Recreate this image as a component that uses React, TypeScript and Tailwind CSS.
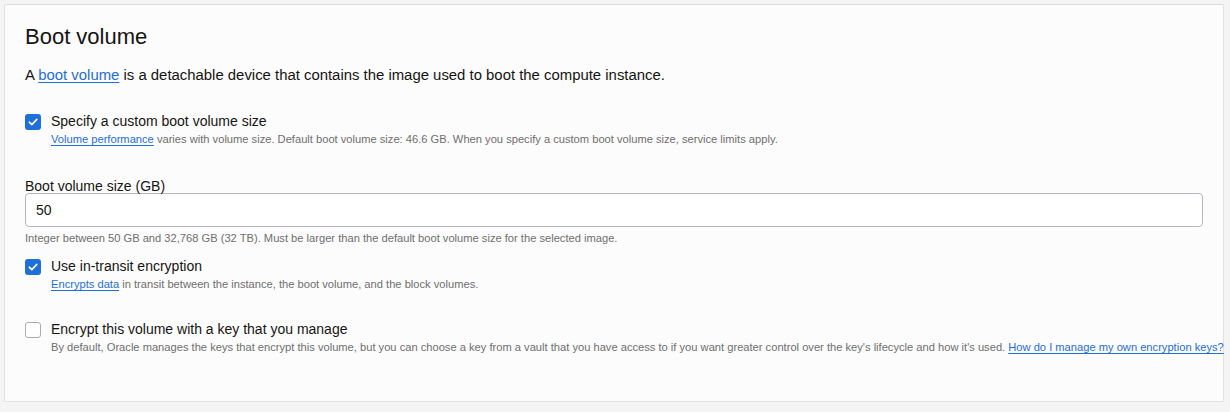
import React from "react";

const font = { fontFamily: '"Liberation Sans", Arial, Helvetica, sans-serif' };

function Check({ checked }: { checked: boolean }) {
  if (checked) {
    return (
      <span className="flex h-4 w-4 shrink-0 items-center justify-center rounded-[3px] bg-[#1f6fd8]">
        <svg width="12" height="12" viewBox="0 0 12 12" fill="none">
          <path d="M2.3 6.2 L4.8 8.6 L9.8 3.4" stroke="#ffffff" strokeWidth="1.6" strokeLinecap="round" strokeLinejoin="round" />
        </svg>
      </span>
    );
  }
  return <span className="block h-4 w-4 shrink-0 rounded-[3px] border border-[#a9adb3] bg-white" />;
}

function CheckRow({
  checked,
  label,
  children,
}: {
  checked: boolean;
  label: string;
  children: React.ReactNode;
}) {
  return (
    <div className="flex gap-[10px]">
      <div className="pt-[3px]">
        <Check checked={checked} />
      </div>
      <div className="flex flex-col">
        <div className="text-[14px] leading-[20px] text-[#161513]">{label}</div>
        <div className="whitespace-nowrap text-[11.15px] leading-[16px] text-[#6f6f6f]">{children}</div>
      </div>
    </div>
  );
}

const Link = ({ children }: { children: React.ReactNode }) => (
  <a className="text-[#1f6fd8] underline underline-offset-2" href="#">
    {children}
  </a>
);

export default function App() {
  return (
    <div className="h-[412px] w-[1230px] overflow-hidden bg-[#f4f4f4] pl-[4px] pt-[4px]" style={font}>
      <div className="h-[398px] w-[1220px] rounded-[2px] border border-[#e1e1e1] border-t-[#dcdcdc] bg-[#fcfcfc] pl-[20px] pr-[20px] pt-[18px]">
        <h2 className="text-[22px] leading-[28px] text-[#161513]">Boot volume</h2>
        <p className="mt-[14px] text-[14.9px] leading-[20px] text-[#161513]">
          A <Link>boot volume</Link> is a detachable device that contains the image used to boot the compute instance.
        </p>
        <div className="mt-[26px]">
          <CheckRow checked label="Specify a custom boot volume size">
            <Link>Volume performance</Link> varies with volume size. Default boot volume size: 46.6 GB. When you specify a custom boot volume size, service limits apply.
          </CheckRow>
        </div>
        <div className="mt-[30px]">
          <div className="text-[14px] leading-[18px] text-[#161513]">Boot volume size (GB)</div>
          <div className="-mt-[2px] flex h-[34px] w-[1178px] items-center rounded-[4px] border border-[#b3b7bd] bg-white pl-[10px] text-[14px] text-[#161513]">
            50
          </div>
          <div className="mt-[3px] text-[11.15px] leading-[16px] text-[#6f6f6f]">
            Integer between 50 GB and 32,768 GB (32 TB). Must be larger than the default boot volume size for the selected image.
          </div>
        </div>
        <div className="mt-[10px]">
          <CheckRow checked label="Use in-transit encryption">
            <Link>Encrypts data</Link> in transit between the instance, the boot volume, and the block volumes.
          </CheckRow>
        </div>
        <div className="mt-[27px]">
          <CheckRow checked={false} label="Encrypt this volume with a key that you manage">
            By default, Oracle manages the keys that encrypt this volume, but you can choose a key from a vault that you have access to if you want greater control over the key's lifecycle and how it's used. <Link>How do I manage my own encryption keys?</Link>
          </CheckRow>
        </div>
      </div>
    </div>
  );
}
